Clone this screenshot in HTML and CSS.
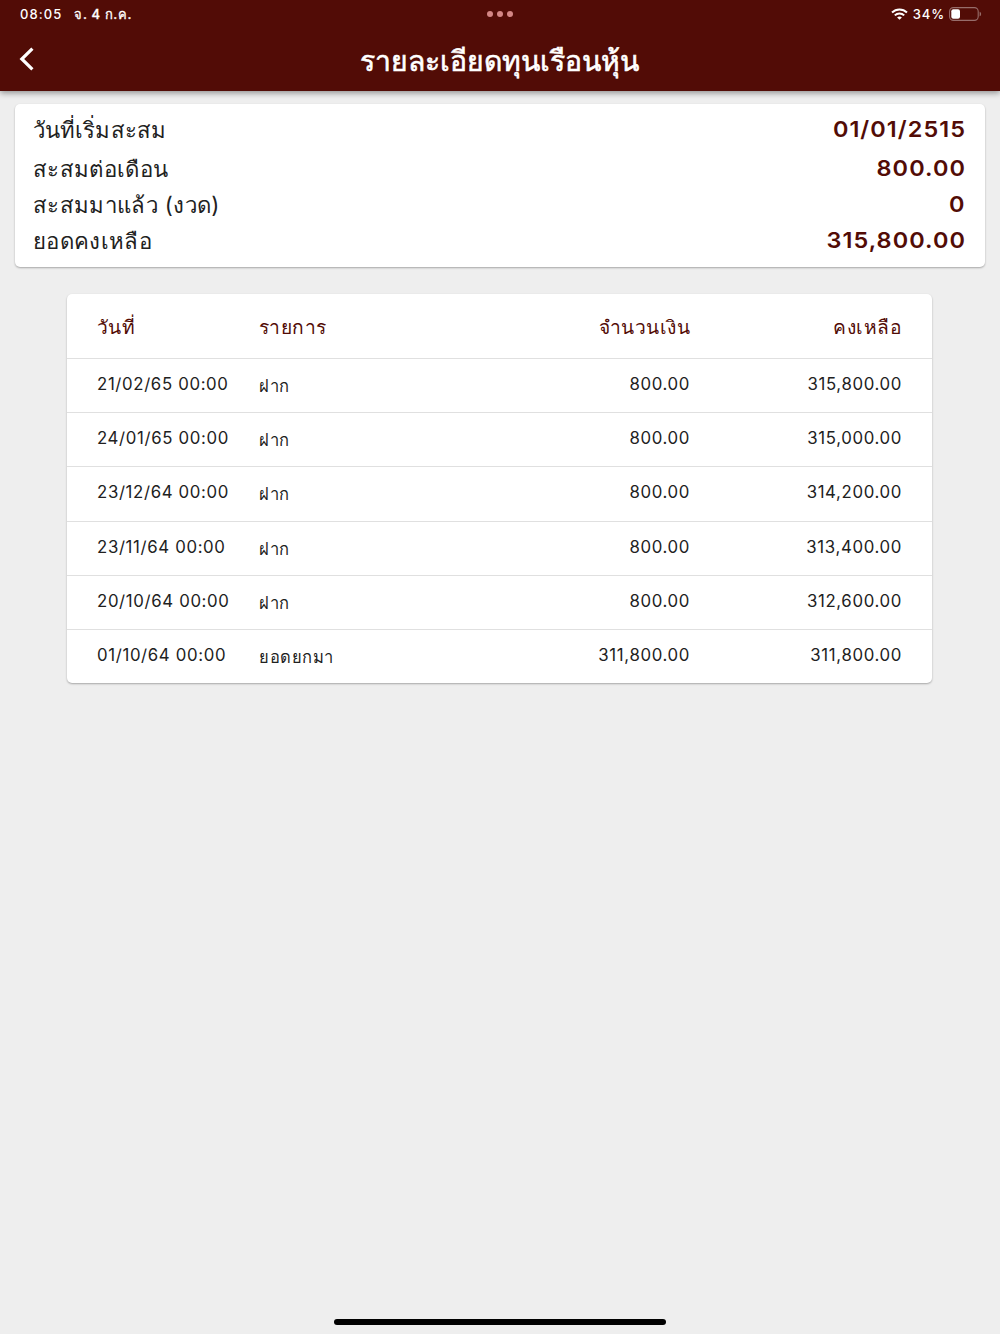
FILE: index.html
```html
<!DOCTYPE html>
<html lang="th">
<head>
  <meta charset="UTF-8">
  <meta name="viewport" content="width=device-width, initial-scale=1.0">
  <title>รายละเอียดทุนเรือนหุ้น</title>
  <link rel="stylesheet" href="styles.css">
</head>
<body>
  <header class="header">
    <!-- status bar -->
    <div class="statusBar">
      <div class="statusLeft">
        <span class="time">08:05</span>
        <span class="date">จ. 4 ก.ค.</span>
      </div>
      <div class="dots"><i></i><i></i><i></i></div>
      <div class="statusRight">
        <svg class="wifi" width="17" height="12" viewBox="0 0 17 12" fill="none" stroke="#fff" stroke-width="2">
          <path d="M1 4.5C5.2 0.4 11.8 0.4 16 4.5"/>
          <path d="M3.8 7.4C6.4 4.8 10.6 4.8 13.2 7.4"/>
          <path d="M8.5 11.8L6.1 9.4C7.4 8.1 9.6 8.1 10.9 9.4Z" fill="#fff" stroke="none"/>
        </svg>
        <span class="percent">34%</span>
        <svg class="battery" width="33" height="14" viewBox="0 0 33 14">
          <rect x="0.6" y="0.6" width="28.6" height="12.8" rx="3.8" fill="none" stroke="#976d6a" stroke-width="1.1"/>
          <rect x="2.3" y="2.3" width="8.7" height="9.4" rx="2" fill="#fff"/>
          <path d="M30.6 4.7C32.6 5.4 32.6 8.6 30.6 9.3Z" fill="#976d6a"/>
        </svg>
      </div>
    </div>

    <!-- title bar -->
    <div class="titleBar">
      <button class="backButton" aria-label="ย้อนกลับ">
        <svg width="16" height="24" viewBox="0 0 16 24" fill="none" stroke="#fff" stroke-width="3.2">
          <path d="M13.4 1.6L2.8 12L13.4 22.4"/>
        </svg>
      </button>
      <h1 class="title">รายละเอียดทุนเรือนหุ้น</h1>
    </div>
  </header>

  <main>
    <section class="summary">
      <div class="summaryRow first"><span class="label">วันที่เริ่มสะสม</span><span class="value">01/01/2515</span></div>
      <div class="summaryRow"><span class="label">สะสมต่อเดือน</span><span class="value">800.00</span></div>
      <div class="summaryRow"><span class="label">สะสมมาแล้ว (งวด)</span><span class="value">0</span></div>
      <div class="summaryRow"><span class="label">ยอดคงเหลือ</span><span class="value">315,800.00</span></div>
    </section>

    <section class="history">
      <div class="row head"><span>วันที่</span><span>รายการ</span><span>จำนวนเงิน</span><span>คงเหลือ</span></div>
      <div class="row"><span>21/02/65 00:00</span><span class="type">ฝาก</span><span>800.00</span><span>315,800.00</span></div>
      <div class="row"><span>24/01/65 00:00</span><span class="type">ฝาก</span><span>800.00</span><span>315,000.00</span></div>
      <div class="row"><span>23/12/64 00:00</span><span class="type">ฝาก</span><span>800.00</span><span>314,200.00</span></div>
      <div class="row"><span>23/11/64 00:00</span><span class="type">ฝาก</span><span>800.00</span><span>313,400.00</span></div>
      <div class="row"><span>20/10/64 00:00</span><span class="type">ฝาก</span><span>800.00</span><span>312,600.00</span></div>
      <div class="row"><span>01/10/64 00:00</span><span class="type">ยอดยกมา</span><span>311,800.00</span><span>311,800.00</span></div>
    </section>
  </main>

  <div class="homeBar"></div>
</body>
</html>
```

FILE: styles.css
```css
* {
  box-sizing: border-box;
}

body {
  margin: 0;
  height: 1334px;
  display: flex;
  flex-direction: column;
  background: #eeeeee;
  color: #212121;
  font-family: Inter, "Noto Sans", sans-serif;
  overflow: hidden;
}

/* header */
.header {
  height: 91px;
  flex: none;
  background: #520c06;
  color: #fff;
  box-shadow: 0 2px 6px rgba(0, 0, 0, 0.4);
}

.statusBar {
  height: 28px;
  padding: 0 18px 0 20px;
  display: grid;
  grid-template-columns: 1fr auto 1fr;
  align-items: center;
  font-size: 13px;
  font-weight: 500;
  line-height: 27px;
}

.statusLeft,
.statusRight {
  display: flex;
  align-items: center;
}

.statusLeft {
  gap: 12px;
}

.time {
  letter-spacing: 1.1px;
}

.date {
  letter-spacing: 0.6px;
  -webkit-text-stroke: 0.3px #fff;
}

.dots {
  display: flex;
  gap: 4px;
  margin-right: 2px;
}

.dots i {
  width: 6px;
  height: 6px;
  border-radius: 50%;
  background: #d38785;
}

.statusRight {
  justify-content: flex-end;
}

.percent {
  margin: 0 4px 0 5px;
  letter-spacing: 0.9px;
}

.titleBar {
  height: 63px;
  display: grid;
  grid-template-columns: 60px 1fr 62px;
  align-items: center;
}

.backButton {
  padding: 0 0 0 19px;
  margin-bottom: 2px;
  border: none;
  background: none;
  height: 24px;
  text-align: left;
}

.backButton svg {
  display: block;
}

.title {
  margin: 2px 0 0;
  font-size: 28.3px;
  font-weight: 500;
  line-height: 40px;
  text-align: center;
  white-space: nowrap;
  -webkit-text-stroke: 0.6px #fff;
}

/* summary card */
.summary {
  height: 163px;
  margin: 13px 15px 0;
  padding: 7px 19px 0 18px;
  background: #fff;
  border-radius: 5px;
  box-shadow: 0 1px 2px rgba(0, 0, 0, 0.3);
}

.summaryRow {
  height: 36px;
  display: flex;
  justify-content: space-between;
  line-height: 36px;
}

.summaryRow.first {
  height: 39px;
}

.label {
  padding-top: 1px;
  font-size: 22.2px;
  letter-spacing: 0.35px;
}

.first .label {
  letter-spacing: 0.1px;
}

/* wide numerals */
.value {
  color: #520c06;
  font-size: 22px;
  font-weight: 600;
  letter-spacing: 1px;
  transform: scaleX(1.065);
  transform-origin: right;
}

/* history table */
.history {
  width: 865px;
  margin: 27px 68px 0 67px;
  background: #fff;
  border-radius: 5px;
  box-shadow: 0 1px 2px rgba(0, 0, 0, 0.3);
}

.row {
  height: 54.2px;
  padding: 0 30px;
  display: grid;
  grid-template-columns: 162px 200px 1fr 212px;
  border-top: 1px solid #e0e0e0;
  font-size: 16.8px;
  letter-spacing: 0.65px;
  line-height: 51px;
  white-space: nowrap;
}

.row span:nth-child(n+3) {
  text-align: right;
}

.row .type {
  padding-top: 2px;
  font-size: 16.5px;
  letter-spacing: 0.5px;
}

.head {
  height: 64px;
  border-top: none;
  color: #520c06;
  font-size: 19.2px;
  letter-spacing: 0.45px;
  line-height: 66px;
}

.homeBar {
  width: 332px;
  height: 6px;
  margin: auto auto 9px;
  flex: none;
  border-radius: 3px;
  background: #000;
}
```
